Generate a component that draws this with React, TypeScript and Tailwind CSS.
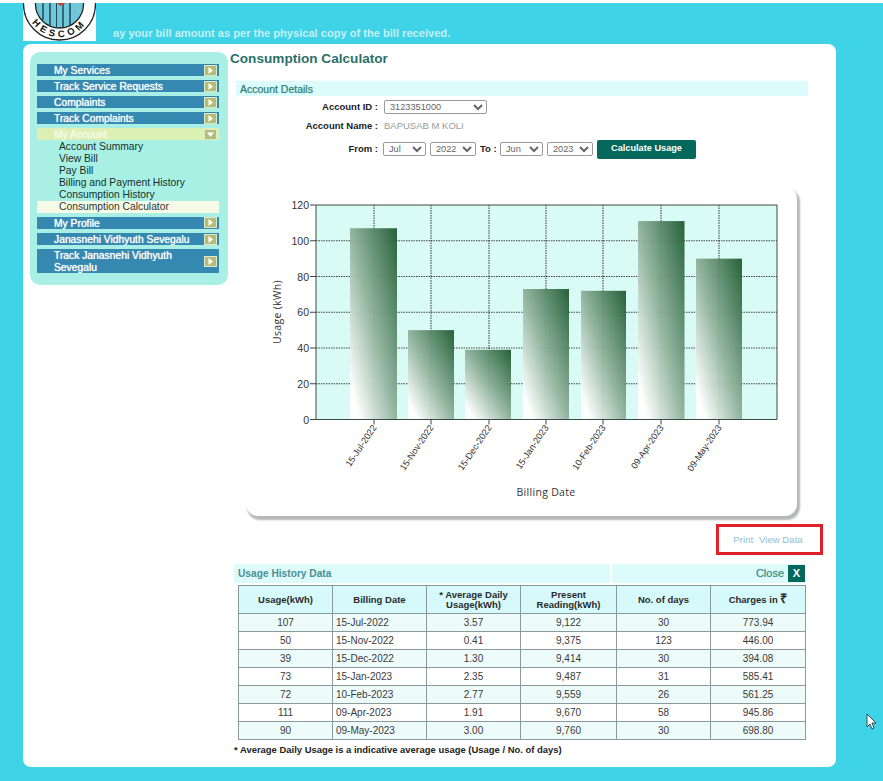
import React from "react";

const FONT = "font-['Liberation_Sans',Arial,sans-serif]";

function Arrow({ down = false }: { down?: boolean }) {
  return (
    <span className="flex h-[11px] w-[13px] shrink-0 items-center justify-center border border-[#dfe8c8] bg-[#b3bd7a]">
      <svg width="7" height="7" viewBox="0 0 7 7">
        {down ? <path d="M0 1.5h7L3.5 6z" fill="#fff" /> : <path d="M1.5 0v7L6 3.5z" fill="#fff" />}
      </svg>
    </span>
  );
}

function MenuItem({ label, tall = false }: { label: React.ReactNode; tall?: boolean }) {
  return (
    <div className={`flex items-center justify-between bg-[#3589b0] pl-[17px] pr-[2px] text-[10.3px] leading-[12px] text-white [text-shadow:0_0_1px_#ffffff] ${tall ? "h-[24px]" : "h-[12px]"}`}>
      <span className="pt-[2px]">{label}</span>
      <Arrow />
    </div>
  );
}

function Sidebar() {
  const sub = ["Account Summary", "View Bill", "Pay Bill", "Billing and Payment History", "Consumption History"];
  return (
    <aside className="w-[198px] shrink-0 self-start rounded-[10px] bg-[#a9efe6] pb-[12px] pl-[7px] pr-[9px] pt-[12px]">
      <div className="flex flex-col gap-[4.1px]">
        <MenuItem label="My Services" />
        <MenuItem label="Track Service Requests" />
        <MenuItem label="Complaints" />
        <MenuItem label="Track Complaints" />
        <div className="-mb-[0.5px]">
          <div className="flex h-[12px] items-center justify-between bg-[#dcf0b4] pl-[17px] pr-[2px] text-[10.3px] leading-[12px] text-[#f4f8e0] [text-shadow:0_0_1px_#ffffff]">
            <span className="pt-[2px]">My Account</span>
            <Arrow down />
          </div>
          <div className="bg-[#a9f0e4] pt-[1px] text-[10.3px] leading-[12px] text-[#12302c]">
            {sub.map((s) => (
              <div key={s} className="pl-[22px]">{s}</div>
            ))}
            <div className="bg-[#f6fbe8] pl-[22px] text-[#33352a]">Consumption Calculator</div>
          </div>
        </div>
        <MenuItem label="My Profile" />
        <MenuItem label="Janasnehi Vidhyuth Sevegalu" />
        <MenuItem
          tall
          label={
            <>
              Track Janasnehi Vidhyuth
              <br />
              Sevegalu
            </>
          }
        />
      </div>
    </aside>
  );
}

function Select({ value, options, w }: { value: string; options: string[]; w: string }) {
  return (
    <select
      defaultValue={value}
      className={`h-[14px] rounded-[2px] border border-[#9a9a9a] bg-white pl-[1px] text-[9.2px] leading-[12px] text-[#666] ${w}`}
    >
      {options.map((o) => (
        <option key={o}>{o}</option>
      ))}
    </select>
  );
}

function AccountDetails() {
  return (
    <section className="ml-[5px] mr-[27px] mt-[13px] h-[83px] border border-[#fafdfd] text-[9.5px] text-[#222]">
      <div className="h-[15px] bg-[#defbfc] pl-[4px] text-[10.5px] leading-[17px] text-[#2f7f78] [text-shadow:0_0_1px_#7fb8b2]">Account Details</div>
      <div className="mt-[4px] flex items-center">
        <span className="w-[142px] text-right font-bold">Account ID :</span>
        <span className="ml-[6px] flex">
          <Select value="3123351000" options={["3123351000"]} w="w-[103px]" />
        </span>
      </div>
      <div className="mt-[5px] flex items-center">
        <span className="w-[142px] text-right font-bold">Account Name :</span>
        <span className="ml-[6px] text-[#9a9a9a]">BAPUSAB M KOLI</span>
      </div>
      <div className="mt-[6px] flex items-center">
        <span className="w-[142px] text-right font-bold">From :</span>
        <span className="ml-[5px] flex items-center gap-[4px]">
          <Select value="Jul" options={["Jul"]} w="w-[43px]" />
          <Select value="2022" options={["2022"]} w="w-[46px]" />
          <span className="w-[16px] whitespace-nowrap font-bold">To :</span>
          <Select value="Jun" options={["Jun"]} w="w-[43px]" />
          <Select value="2023" options={["2023"]} w="w-[46px]" />
          <span className="flex h-[19px] w-[99px] items-center justify-center rounded-[2px] bg-[#04695c] text-[9.2px] font-bold text-white">
            Calculate Usage
          </span>
        </span>
      </div>
    </section>
  );
}

const DATA: [string, number, number, number][] = [
  ["15-Jul-2022", 107, 104, 47],
  ["15-Nov-2022", 50, 162, 46],
  ["15-Dec-2022", 39, 219, 46],
  ["15-Jan-2023", 73, 277, 46],
  ["10-Feb-2023", 72, 335, 45],
  ["09-Apr-2023", 111, 392, 46.5],
  ["09-May-2023", 90, 450, 46],
];

function Chart() {
  const left = 70;
  const right = 531;
  const top = 18;
  const bottom = 232.5;
  const y = (v: number) => bottom - ((bottom - top) * v) / 120;
  const xs = [128, 185, 243, 300, 357, 415, 473];
  const font = { fontFamily: "'Liberation Sans',Arial,sans-serif" };
  const axisFont = { fontFamily: "'Open Sans',sans-serif" };
  return (
    <svg width="551" height="329" viewBox="0 0 551 329" className="block">
      <defs>
        <linearGradient id="bar" x1="0" y1="1" x2="1" y2="0">
          <stop offset="0" stopColor="#ffffff" />
          <stop offset="0.1" stopColor="#ffffff" />
          <stop offset="0.5" stopColor="#8fb19a" />
          <stop offset="1" stopColor="#1c5a30" />
        </linearGradient>
      </defs>
      <rect x={left} y={top} width={right - left} height={bottom - top} fill="#d9fbf6" />
      {[20, 40, 60, 80, 100].map((v) => (
        <line key={v} x1={left} x2={right} y1={y(v)} y2={y(v)} stroke="#444" strokeDasharray="1.5 1" />
      ))}
      {xs.map((x) => (
        <line key={x} x1={x} x2={x} y1={top} y2={bottom} stroke="#333" strokeDasharray="1.5 1" />
      ))}
      {DATA.map(([, v, bx, bw], i) => (
        <rect key={i} x={bx} y={y(v)} width={bw} height={bottom - y(v)} fill="url(#bar)" fillOpacity="0.95" />
      ))}
      <path d={`M${left} ${bottom}V${top}H${right}V${bottom}Z`} fill="none" stroke="#3c4a46" strokeWidth="1" />
      {[0, 20, 40, 60, 80, 100, 120].map((v) => (
        <g key={v}>
          <line x1={left - 6} x2={left} y1={y(v)} y2={y(v)} stroke="#444" />
          <text x={left - 7} y={y(v) + 4} textAnchor="end" fontSize="10.5" fill="#333" style={font}>{v}</text>
        </g>
      ))}
      {DATA.map(([d], i) => (
        <g key={d}>
          <line x1={xs[i]} x2={xs[i]} y1={bottom} y2={bottom + 5} stroke="#444" />
          <text
            transform={`translate(${xs[i] + 3} ${bottom + 8}) rotate(-56)`}
            textAnchor="end"
            fontSize="9.1"
            fill="#333"
            style={font}
          >
            {d}
          </text>
        </g>
      ))}
      <text transform="translate(35 125) rotate(-90)" textAnchor="middle" fontSize="10.5" letterSpacing="0.3" fill="#333" style={axisFont}>
        Usage (kWh)
      </text>
      <text x="300" y="309" textAnchor="middle" fontSize="10.5" letterSpacing="0.3" fill="#333" style={axisFont}>
        Billing Date
      </text>
    </svg>
  );
}

const ROWS = [
  ["107", "15-Jul-2022", "3.57", "9,122", "30", "773.94"],
  ["50", "15-Nov-2022", "0.41", "9,375", "123", "446.00"],
  ["39", "15-Dec-2022", "1.30", "9,414", "30", "394.08"],
  ["73", "15-Jan-2023", "2.35", "9,487", "31", "585.41"],
  ["72", "10-Feb-2023", "2.77", "9,559", "26", "561.25"],
  ["111", "09-Apr-2023", "1.91", "9,670", "58", "945.86"],
  ["90", "09-May-2023", "3.00", "9,760", "30", "698.80"],
];

function UsageTable() {
  const th = "border border-[#8a9a9a] px-[2px] text-center align-middle text-[9.5px] font-bold leading-[10px] text-[#2a2a2a]";
  const td = "border border-[#8a9a9a] text-center text-[#3a3a3a]";
  return (
    <table className="w-[567px] table-fixed border-collapse text-[10px]">
      <colgroup>
        <col className="w-[94px]" />
        <col className="w-[94px]" />
        <col className="w-[94px]" />
        <col className="w-[96px]" />
        <col className="w-[94px]" />
        <col className="w-[95px]" />
      </colgroup>
      <thead>
        <tr className="h-[28px] bg-[#d6fafc]">
          <th className={th}>Usage(kWh)</th>
          <th className={th}>Billing Date</th>
          <th className={th}>
            * Average Daily
            <br />
            Usage(kWh)
          </th>
          <th className={th}>
            Present
            <br />
            Reading(kWh)
          </th>
          <th className={th}>No. of days</th>
          <th className={th}>
            Charges in <span className="text-[13px]">₹</span>
          </th>
        </tr>
      </thead>
      <tbody>
        {ROWS.map((r, i) => (
          <tr key={r[0]} className={`h-[18px] ${i % 2 === 0 ? "bg-[#edfcfb]" : "bg-white"}`}>
            {r.map((c, j) => (
              <td key={j} className={j === 1 ? `${td} pl-[3px] !text-left` : td}>{c}</td>
            ))}
          </tr>
        ))}
      </tbody>
    </table>
  );
}

function Logo() {
  return (
    <div className="h-[38px] w-[73px] shrink-0 overflow-hidden bg-white">
      <svg width="73" height="38" viewBox="0 0 73 38">
        <defs>
          <path id="arc" d="M3.5 1 A33 33 0 0 0 69.5 1" />
        </defs>
        <circle cx="36.5" cy="1" r="36" fill="#fff" stroke="#222" strokeWidth="1.3" />
        <circle cx="36.5" cy="1" r="24" fill="#6fc7d8" stroke="#222" strokeWidth="1.3" />
        <path d="M20 0v17M27 0v23M40 0v24M47 0v22" stroke="#1f4a5a" strokeWidth="1.5" fill="none" />
        <path d="M33.5 0v25" stroke="#1f4a5a" strokeWidth="1" />
        <path d="M34 0h9l-6 3z" fill="#c8403c" />
        <text fontSize="9.5" fontWeight="700" fill="#111" letterSpacing="3.8" style={{ fontFamily: "'Liberation Sans',Arial,sans-serif" }}>
          <textPath href="#arc" startOffset="50%" textAnchor="middle">HESCOM</textPath>
        </text>
      </svg>
    </div>
  );
}

export default function App() {
  return (
    <div className={`relative h-[781px] w-[883px] overflow-hidden bg-[#3fd3e8] ${FONT}`}>
      <div className="h-[3px] bg-white" />
      <header className="flex h-[41px] pl-[23px]">
        <Logo />
        <p className="ml-[17px] mt-[23px] text-[11.1px] font-bold leading-[14px] text-[#c5f0f5]">
          ay your bill amount as per the physical copy of the bill received.
        </p>
      </header>
      <main className="ml-[23px] flex h-[723px] w-[813px] rounded-[8px] bg-white pl-[7px] pt-[7px]">
        <div className="mt-[1px]">
          <Sidebar />
        </div>
        <div className="ml-[2px] min-w-0 flex-1">
          <h1 className="h-[16px] text-[13.6px] font-bold leading-[16px] text-[#2b6f68]">Consumption Calculator</h1>
          <AccountDetails />
          <div className="ml-[16px] mt-[24px] h-[329px] w-[551px] rounded-[12px] bg-white shadow-[2px_3px_2px_1px_#b5b8b6]">
            <Chart />
          </div>
          <div className="ml-[486px] mt-[8px] flex h-[31px] w-[107px] items-center justify-center gap-[6px] border-[3px] border-[#e0202c] pr-[3px] pt-[2px] text-[9.6px] text-[#8bc0d8]">
            <span>Print</span>
            <span>View Data</span>
          </div>
          <div className="ml-[4px] mt-[9px] flex h-[19px] w-[571px] gap-[2px]">
            <div className="w-[376px] bg-[#defbfc] pl-[4px] text-[10.2px] font-bold leading-[19px] text-[#4c8f93]">Usage History Data</div>
            <div className="flex flex-1 items-center justify-end gap-[4px] bg-[#defbfc]">
              <span className="text-[11px] text-[#3f8f88] [text-shadow:0_0_1px_#7fb8b2]">Close</span>
              <span className="flex h-[17px] w-[17px] items-center justify-center bg-[#04695c] text-[11px] font-bold text-white">X</span>
            </div>
          </div>
          <div className="ml-[8px] mt-[2px]">
            <UsageTable />
            <p className="-ml-[4px] mt-[4px] text-[9.45px] font-bold leading-[11px] text-[#222]">
              * Average Daily Usage is a indicative average usage (Usage / No. of days)
            </p>
          </div>
        </div>
      </main>
      <svg className="absolute left-[866px] top-[713px]" width="12" height="18" viewBox="0 0 12 18">
        <path d="M1 1v13l3-3 2 5 2-1-2-5h4z" fill="#fff" stroke="#222" strokeWidth="0.8" />
      </svg>
    </div>
  );
}
